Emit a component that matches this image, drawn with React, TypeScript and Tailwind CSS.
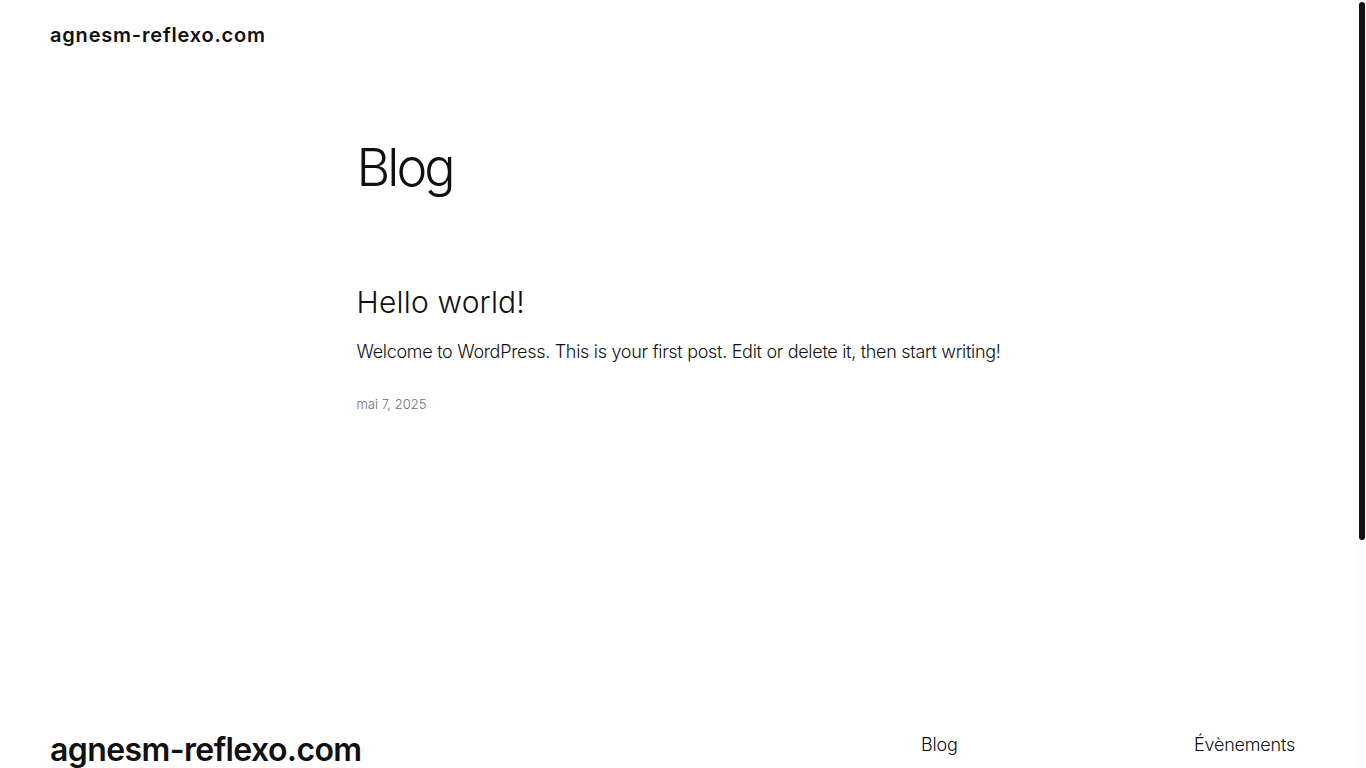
export default function App() {
  const font = { fontFamily: 'Inter, "Noto Sans", sans-serif' };
  return (
    <div className="flex h-[768px] w-[1366px] overflow-hidden bg-white text-[#111111]" style={font}>
      <div className="flex w-[1358px] flex-col">
        <header className="px-[50px] pt-[21px]">
          <div className="text-[20px] font-semibold leading-[28px] tracking-[0.8px]">agnesm-reflexo.com</div>
        </header>
        <main className="mx-auto w-[645px]">
          <h1 className="mt-[88px] text-[52px] font-light leading-[1.2] tracking-[-3px]">Blog</h1>
          <h2 className="mt-[85px] text-[30px] font-light leading-[1.2] tracking-[0.2px]">Hello world!</h2>
          <p className="mt-[18px] whitespace-nowrap text-[18px] font-light leading-[1.6] tracking-[-0.3px]">
            Welcome to WordPress. This is your first post. Edit or delete it, then start writing!
          </p>
          <div className="mt-[28px] text-[13px] font-light leading-[1.4] text-[#6e6e6e]">mai 7, 2025</div>
        </main>
        <footer className="mt-[318px] flex items-start justify-between px-[50px]">
          <div className="text-[32px] font-semibold leading-[1.2] tracking-[-0.6px]">agnesm-reflexo.com</div>
          <nav className="grid w-[387px] grid-cols-[273px_1fr] text-[18px] font-light leading-[1.6] tracking-[-0.2px]">
            <a>Blog</a>
            <a>Évènements</a>
          </nav>
        </footer>
      </div>
      <div className="w-[8px] bg-[#fcfcfc] pt-[2px]">
        <div className="ml-[0.5px] h-[538px] w-[6px] rounded-full bg-[#111111]" />
      </div>
    </div>
  );
}
